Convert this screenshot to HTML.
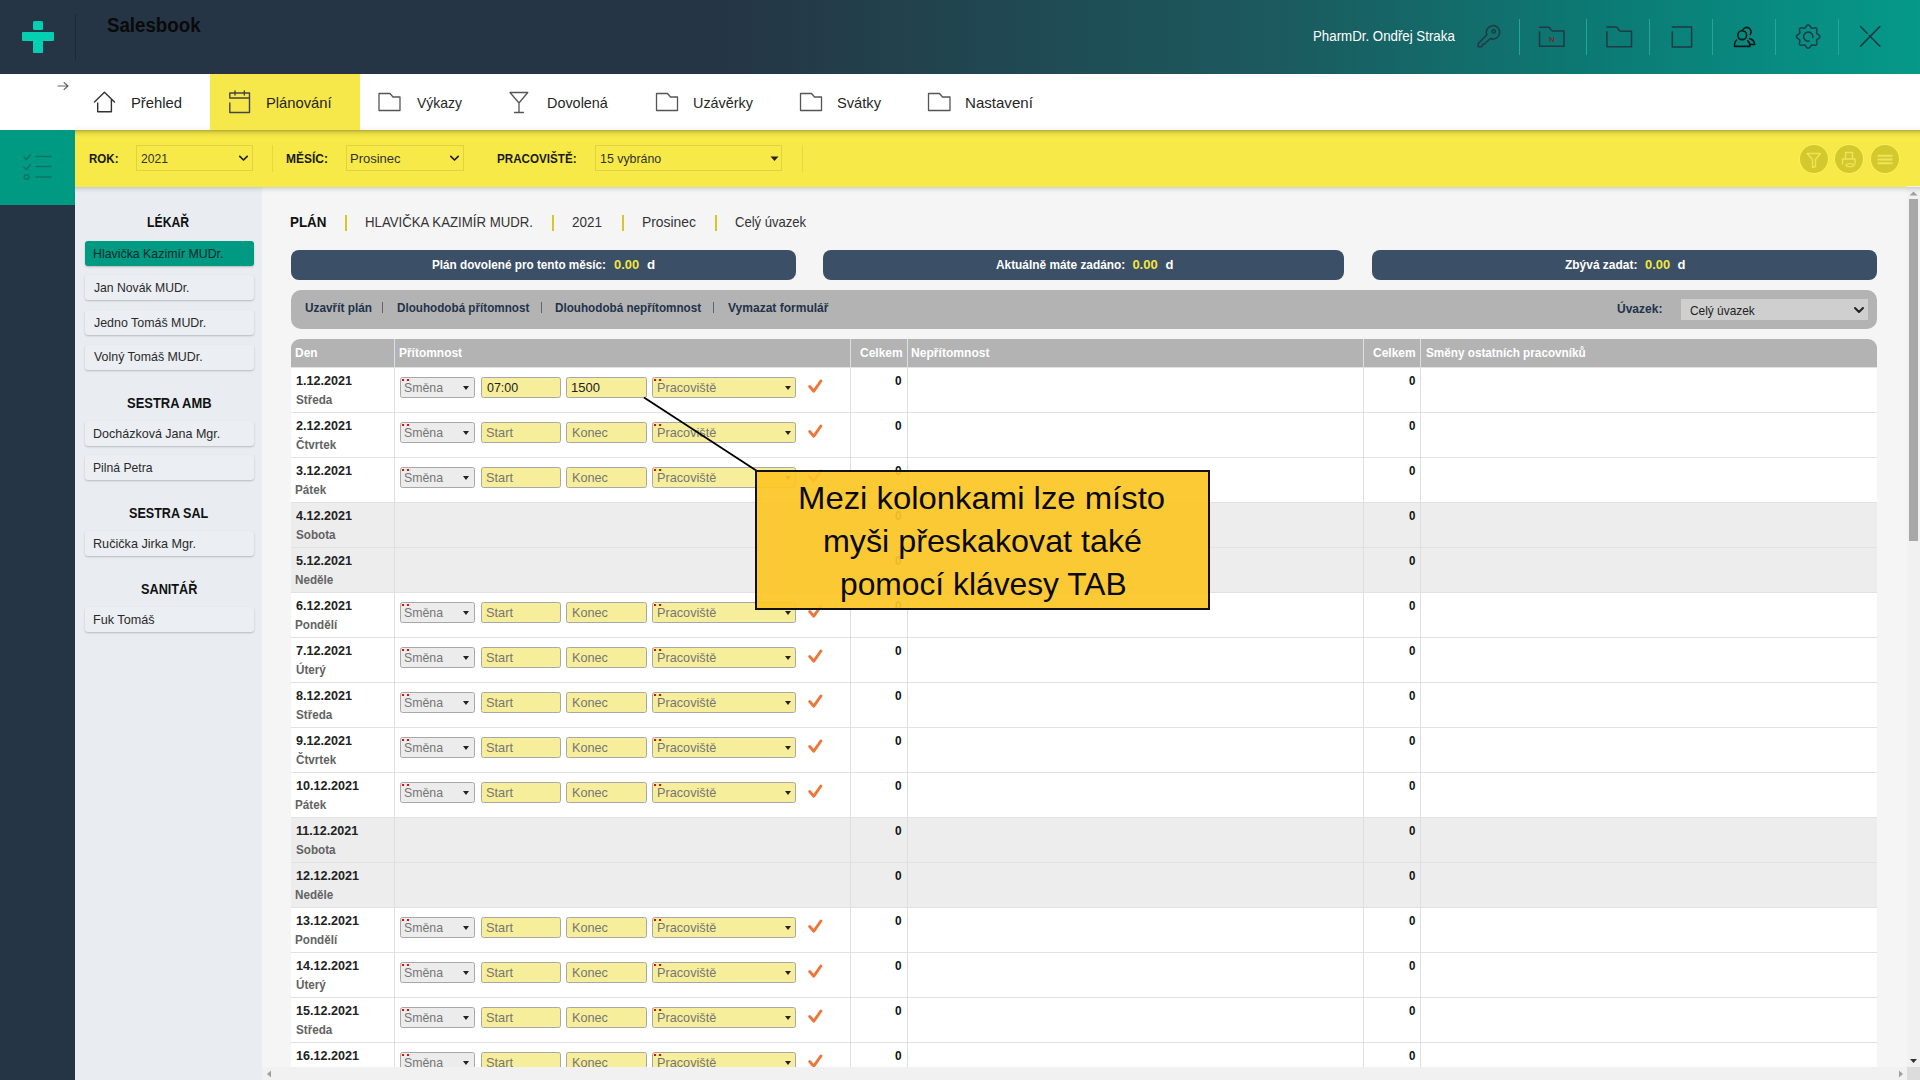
<!DOCTYPE html>
<html><head><meta charset="utf-8">
<style>
*{box-sizing:border-box;margin:0;padding:0}
html,body{width:1920px;height:1080px;overflow:hidden;font-family:"Liberation Sans",sans-serif;background:#f5f5f5;position:relative;color:#222}
.abs{position:absolute}
.t{position:absolute;white-space:nowrap;line-height:1;transform-origin:0 0;z-index:10}
#hdr{left:0;top:0;width:1920px;height:74px;background:linear-gradient(to right,#253545 0px,#253545 720px,#1b5b5f 1290px,#0c7a74 1600px,#05998a 1920px)}
#nav{left:0;top:74px;width:1920px;height:56px;background:#fff;z-index:3}
#navsh{left:75px;top:130px;width:1845px;height:7px;background:linear-gradient(rgba(0,0,0,.27),rgba(0,0,0,.12) 30%,rgba(0,0,0,.04) 65%,rgba(0,0,0,0));z-index:4}
#navsh2{left:75px;top:124px;width:1845px;height:6px;background:linear-gradient(rgba(0,0,0,0),rgba(0,0,0,.035));z-index:4}
#teal{left:0;top:130px;width:75px;height:75px;background:#009982;z-index:2}
#lside{left:0;top:205px;width:75px;height:875px;background:#253545}
#ybar{left:75px;top:130px;width:1845px;height:57px;background:#f6e948;z-index:2}
#ybarsh{left:75px;top:187px;width:1845px;height:6px;background:linear-gradient(rgba(0,0,0,.14),rgba(0,0,0,.05) 50%,rgba(0,0,0,0));z-index:17}
#panel{left:75px;top:186px;width:187px;height:894px;background:#e9edf1}
/* header */
.logo1{left:33px;top:20.5px;width:9.5px;height:9.5px;background:#04cfb1;border-radius:1.5px}
.logo3{left:33px;top:40px;width:9.5px;height:12.5px;background:#04cfb1;border-radius:1px}
.logo2{left:22px;top:32px;width:31.8px;height:9.3px;background:#04cfb1;border-radius:1px}
.hdiv{left:75px;top:14px;width:1px;height:46px;background:#1b2935}
.brand{left:106px;top:14px;font-size:20px;font-weight:bold;color:#0d0d0d}
.user{left:1313px;top:29px;font-size:14px;color:#fff}
.hsep{top:19px;width:1px;height:36px;background:#27ab99;opacity:.9}
.hic{position:absolute;top:0}
/* nav */
.nv{top:95px;font-size:15px;color:#222;z-index:5}
.navarrow{left:57px;top:79px;font-size:13px;color:#555;z-index:5}
.tabon{left:210px;top:74px;width:150px;height:56px;background:#f6e84a;z-index:4}
.nic{position:absolute;z-index:5}
/* filter */
.fl{top:152px;font-size:13px;font-weight:bold;color:#1a1a1a;z-index:5}
.fsel{position:absolute;top:145px;height:26px;border:1px solid #e0d240;z-index:5;font-size:13px;color:#333}
.fsel span{position:absolute;left:6px;top:6px;line-height:1}
.fdiv{position:absolute;top:145px;width:1px;height:27px;background:#e6d83f;z-index:5}
.fcirc{position:absolute;top:145px;width:28px;height:28px;border-radius:50%;background:#d3c82c;z-index:5;box-shadow:0 0 1px 1px rgba(255,250,120,.5)}
/* sidebar */
.sh{left:75px;width:187px;text-align:center;font-size:13px;font-weight:bold;color:#1a1a1a}
.sb{position:absolute;left:85px;width:169px;height:25px;background:#ebeef2;border-radius:3px;box-shadow:0 1px 2px rgba(0,0,0,.22);font-size:12.5px;color:#333}
.sb span{position:absolute;left:10px;top:6px;line-height:1;white-space:nowrap}
.sb.on{background:#009982;color:#1a2a2a}
/* main */
.bc{top:216px;font-size:14px;color:#333}
.bsep{position:absolute;top:214.5px;width:1.5px;height:16px;background:#d9c52a}
.pill{position:absolute;top:250px;height:30px;background:#3b4f66;border-radius:8px;color:#fff;font-size:13px;font-weight:bold;text-align:center}
.pill span{position:absolute;top:9px;line-height:1;white-space:nowrap}
.pill .y{color:#f6e84a}
#abar{left:291px;top:290px;width:1586px;height:39px;background:#b3b3b3;border-radius:10px}
.ab{top:302px;font-size:13px;font-weight:bold;color:#253545}
.absep{position:absolute;top:302px;width:1px;height:11px;background:#5d6670}
#usel{left:1681px;top:299px;width:187px;height:21px;background:#cfcfcf;font-size:13px;color:#222}
/* table */
#thead{left:291px;top:339px;width:1586px;height:28px;background:#b3b3b3;border-radius:9px 9px 0 0}
.th{top:347px;font-size:12px;font-weight:bold;color:#fff}
.vline{position:absolute;width:1px;background:#dfdfdf}
.row{position:absolute;left:291px;width:1586px;height:45px;background:#fff;border-top:1px solid #e2e2e2}
.row.we{background:#ededed}
.dt{position:absolute;left:5px;top:9px;font-size:12px;font-weight:bold;color:#222;line-height:1}
.dn{position:absolute;left:5px;top:28px;font-size:12px;font-weight:bold;color:#555;line-height:1}
.sel,.inp{position:absolute;z-index:7;height:21px;border:1.5px solid #a8a8a8;border-radius:2.5px;font-size:12.5px;color:#7a7a7a}
.sel span,.inp span{position:absolute;top:4px;line-height:1;white-space:nowrap}
.sm{left:400px;width:75px;background:#ececec}
.sm span{left:4px}
.pr{left:652px;width:144px;background:#f6ee9a}
.pr span{left:5px}
.inp{background:#f6ee9a}
.inp span{left:5px}
.i1{left:481px;width:80px}
.i2{left:566px;width:81px}
.val{color:#222}
.rd{position:absolute;left:1px;top:1px;width:8px;height:2px;background:linear-gradient(to right,#f00 0,#f00 2px,transparent 2px,transparent 5px,#f00 5px,#f00 7px,transparent 7px)}
.tri{position:absolute;top:7.5px;width:0;height:0;border-left:3.7px solid transparent;border-right:3.7px solid transparent;border-top:4px solid #222}
.sm .tri{left:62.3px}
.pr .tri{left:131.5px}
.chk{position:absolute;left:807px;z-index:8}
.z{position:absolute;top:9px;font-size:12px;font-weight:bold;color:#111;line-height:1}
.z1{left:604px}
.z2{left:1118px}
/* scrollbars */
#vscroll{z-index:15;left:1907px;top:186px;width:13px;height:881px;background:#f1f1f1}
#vthumb{z-index:16;left:1909px;top:199px;width:9px;height:342px;background:#a8a8a8}
#hscroll{z-index:15;left:262px;top:1067px;width:1645px;height:13px;background:#f1f1f1}
#corner{z-index:16;left:1907px;top:1067px;width:13px;height:13px;background:#dcdcdc}
/* callout */
#callline{position:absolute;left:0;top:0;z-index:20}
#callout{left:755px;top:470px;width:455px;height:140px;background:rgba(252,198,38,.93);border:2px solid #111;z-index:21;font-size:31px;color:#111;text-align:center;line-height:43px;padding-top:5px}

</style></head><body>
<div id="hdr" class="abs"></div>
<div class="abs logo1"></div><div class="abs logo2"></div><div class="abs logo3"></div>
<div class="abs hdiv"></div>
<div class="abs hsep" style="left:1519px"></div>
<div class="abs hsep" style="left:1586px"></div>
<div class="abs hsep" style="left:1649px"></div>
<div class="abs hsep" style="left:1712px"></div>
<div class="abs hsep" style="left:1775px"></div>
<div class="abs hsep" style="left:1838px"></div>
<svg class="hic" width="1920" height="74" style="left:0">
 <g fill="none" stroke="#1e3a44" stroke-width="1.5" stroke-linecap="round" stroke-linejoin="round">
  <path d="M1486.79 34.81 L1478.2 43.8 V46.8 H1481.5 L1482.6 45.6 V44.3 H1484 L1490.49 38.51 A6.7 6.7 0 1 0 1486.79 34.81 Z"/><circle cx="1493.7" cy="31.4" r="1.6"/>
  <path d="M1539.5 27.2 H1548.8 C1550 27.2 1550.8 30.9 1552.3 30.9 H1564 V46.3 H1539.5 V32"/>
  <path d="M1606.9 27 H1616.3 C1617.5 27 1618.6 31.2 1620.5 31.2 H1631.5 V46.7 H1606.9 V31.8"/>
  <path d="M1672.3 27 H1691.6 V46.9 H1672.3 V32.1"/>
  <g stroke="#0b1718" stroke-width="1.6">
   <path d="M1742.6 30.3 A4.4 4.4 0 1 1 1750.3 34.4"/>
   <circle cx="1742.2" cy="35.2" r="4.4"/>
   <path d="M1736.6 40 C1735 41.3 1734.5 43.5 1734.5 46.4 H1750 C1750 44 1749.3 41.8 1747.6 40.6"/>
   <path d="M1749.5 38.6 C1752.5 39.6 1754.6 41.8 1754.6 44.5 H1750.5"/>
  </g>
  <path d="M1808.20 24.95 L1808.65 25.02 L1809.10 25.22 L1809.51 25.54 L1809.89 25.95 L1810.23 26.40 L1810.54 26.86 L1810.82 27.30 L1811.10 27.67 L1811.39 27.96 L1811.70 28.15 L1812.06 28.23 L1812.46 28.23 L1812.92 28.17 L1813.43 28.06 L1813.98 27.95 L1814.54 27.87 L1815.09 27.86 L1815.61 27.92 L1816.07 28.09 L1816.44 28.36 L1816.71 28.73 L1816.88 29.19 L1816.94 29.71 L1816.93 30.26 L1816.85 30.82 L1816.74 31.37 L1816.63 31.88 L1816.57 32.34 L1816.57 32.74 L1816.65 33.10 L1816.84 33.41 L1817.13 33.70 L1817.50 33.98 L1817.94 34.26 L1818.40 34.57 L1818.85 34.91 L1819.26 35.29 L1819.58 35.70 L1819.78 36.15 L1819.85 36.60 L1819.78 37.05 L1819.58 37.50 L1819.26 37.91 L1818.85 38.29 L1818.40 38.63 L1817.94 38.94 L1817.50 39.22 L1817.13 39.50 L1816.84 39.79 L1816.65 40.10 L1816.57 40.46 L1816.57 40.86 L1816.63 41.32 L1816.74 41.83 L1816.85 42.38 L1816.93 42.94 L1816.94 43.49 L1816.88 44.01 L1816.71 44.47 L1816.44 44.84 L1816.07 45.11 L1815.61 45.28 L1815.09 45.34 L1814.54 45.33 L1813.98 45.25 L1813.43 45.14 L1812.92 45.03 L1812.46 44.97 L1812.06 44.97 L1811.70 45.05 L1811.39 45.24 L1811.10 45.53 L1810.82 45.90 L1810.54 46.34 L1810.23 46.80 L1809.89 47.25 L1809.51 47.66 L1809.10 47.98 L1808.65 48.18 L1808.20 48.25 L1807.75 48.18 L1807.30 47.98 L1806.89 47.66 L1806.51 47.25 L1806.17 46.80 L1805.86 46.34 L1805.58 45.90 L1805.30 45.53 L1805.01 45.24 L1804.70 45.05 L1804.34 44.97 L1803.94 44.97 L1803.48 45.03 L1802.97 45.14 L1802.42 45.25 L1801.86 45.33 L1801.31 45.34 L1800.79 45.28 L1800.33 45.11 L1799.96 44.84 L1799.69 44.47 L1799.52 44.01 L1799.46 43.49 L1799.47 42.94 L1799.55 42.38 L1799.66 41.83 L1799.77 41.32 L1799.83 40.86 L1799.83 40.46 L1799.75 40.10 L1799.56 39.79 L1799.27 39.50 L1798.90 39.22 L1798.46 38.94 L1798.00 38.63 L1797.55 38.29 L1797.14 37.91 L1796.82 37.50 L1796.62 37.05 L1796.55 36.60 L1796.62 36.15 L1796.82 35.70 L1797.14 35.29 L1797.55 34.91 L1798.00 34.57 L1798.46 34.26 L1798.90 33.98 L1799.27 33.70 L1799.56 33.41 L1799.75 33.10 L1799.83 32.74 L1799.83 32.34 L1799.77 31.88 L1799.66 31.37 L1799.55 30.82 L1799.47 30.26 L1799.46 29.71 L1799.52 29.19 L1799.69 28.73 L1799.96 28.36 L1800.33 28.09 L1800.79 27.92 L1801.31 27.86 L1801.86 27.87 L1802.42 27.95 L1802.97 28.06 L1803.48 28.17 L1803.94 28.23 L1804.34 28.23 L1804.70 28.15 L1805.01 27.96 L1805.30 27.67 L1805.58 27.30 L1805.86 26.86 L1806.17 26.40 L1806.51 25.95 L1806.89 25.54 L1807.30 25.22 L1807.75 25.02 L1808.20 24.95Z"/>
  <path d="M1809.16 41.10 A4.6 4.6 0 1 1 1812.70 37.56"/>
  <path d="M1860.6 26.6 L1867.3 33.5 M1869.3 35.5 L1879.8 46.1 M1879.8 26.6 L1860.6 46.1"/>
 </g>
 <text x="1549" y="41.5" font-family="Liberation Sans" font-size="8" font-weight="bold" fill="#6b2d2d">N</text>
</svg>

<div id="nav" class="abs"></div>
<div id="navsh" class="abs"></div>
<div id="navsh2" class="abs"></div>
<div class="abs tabon"></div>
<svg class="abs" style="left:55px;top:80px;z-index:6" width="16" height="12"><path d="M3 6 H13 M9 2.5 L13 6 L9 9.5" fill="none" stroke="#666" stroke-width="1.1" stroke-linecap="round" stroke-linejoin="round"/></svg>
<svg class="nic" style="left:0;top:74px" width="1100" height="56">
 <g fill="none" stroke="#333" stroke-width="1.4" stroke-linejoin="round" stroke-linecap="round">
  <path d="M94.5 28 L104.4 18.3 L114.5 28 M97.7 29 V37.8 H111.4 V25.5"/>
  <path d="M229.8 24 V19 H249.5 V38.5 H229.8 V29 M229.8 24 H249.5 M235 17 V21 M244.3 17 V21" stroke="#444"/>
  <path d="M379 19.5 H390 L393 23 H400 V36.5 H379 Z" stroke="#555" stroke-width="1.3"/>
  <path d="M510 18.5 H527.8 L519 29 Z M519 29 V38.5 M514.5 38.5 H523.5" stroke="#555" stroke-width="1.3"/>
  <path d="M656.5 19.5 H667.5 L670.5 23 H677.5 V36.5 H656.5 Z" stroke="#555" stroke-width="1.3"/>
  <path d="M800.5 19.5 H811.5 L814.5 23 H821.5 V36.5 H800.5 Z" stroke="#555" stroke-width="1.3"/>
  <path d="M928.5 19.5 H939.5 L942.5 23 H950 V36.5 H928.5 Z" stroke="#555" stroke-width="1.3"/>
 </g>
</svg>

<div id="teal" class="abs"></div>
<svg class="abs" style="left:0;top:130px;z-index:3" width="75" height="75">
 <g fill="none" stroke="#0f7465" stroke-width="1.5" stroke-linecap="round">
  <path d="M24 27 L26.5 29.5 L30.5 24.5 M24 37 L26.5 39.5 L30.5 34.5 M36 26.5 H51 M36 36.5 H51 M36 47 H51"/>
  <circle cx="26.5" cy="47" r="2.3"/>
 </g>
</svg>
<div id="lside" class="abs"></div>
<div id="ybar" class="abs"></div>
<div id="ybarsh" class="abs"></div>
<div class="fsel" style="left:136px;width:117px"></div>
<div class="fdiv" style="left:272px"></div>
<div class="fsel" style="left:346px;width:118px"></div>
<div class="fsel" style="left:595px;width:187px"></div>
<div class="fdiv" style="left:802px"></div>
<svg class="abs" style="left:0;top:130px;z-index:6" width="1920" height="56">
 <g fill="none" stroke="#222" stroke-width="1.7" stroke-linecap="round" stroke-linejoin="round">
  <path d="M239.8 26.3 L243.5 30 L247.2 26.3 M450.8 26.3 L454.5 30 L458.2 26.3"/>
 </g>
 <path d="M770.5 26.5 H778.5 L774.5 31 Z" fill="#222"/>
</svg>
<div class="fcirc" style="left:1800px"></div>
<div class="fcirc" style="left:1835px"></div>
<div class="fcirc" style="left:1871px"></div>
<svg class="abs" style="left:0;top:130px;z-index:6" width="1920" height="56">
 <g fill="none" stroke="#efe35a" stroke-width="1.4" stroke-linejoin="round" stroke-linecap="round">
  <path d="M1807 23.5 H1820.5 L1815.5 29.5 V36.5 L1812.5 37.5 V29.5 Z"/>
  <path d="M1845.5 28.5 V22.5 H1852.5 V28.5 M1842.5 34 V29 H1855 V34 M1846 35.5 C1846 33 1854 33 1854 35.5 C1854 37 1846 37 1846 35.5 Z"/>
  <path d="M1877.5 25.8 H1892.5 M1877.5 29.5 H1892.5 M1877.5 33.2 H1892.5" stroke-width="1.9" stroke-linecap="butt"/>
 </g>
</svg>

<div id="panel" class="abs"></div>
<div class="sb on" style="top:241px"></div>
<div class="sb" style="top:275px"></div>
<div class="sb" style="top:310px"></div>
<div class="sb" style="top:345px"></div>
<div class="sb" style="top:421px"></div>
<div class="sb" style="top:455px"></div>
<div class="sb" style="top:531px"></div>
<div class="sb" style="top:607px"></div>

<div class="bsep" style="left:345px"></div>
<div class="bsep" style="left:552px"></div>
<div class="bsep" style="left:622px"></div>
<div class="bsep" style="left:715px"></div>

<div class="pill" style="left:291px;width:505px"></div>
<div class="pill" style="left:823px;width:521px"></div>
<div class="pill" style="left:1372px;width:505px"></div>

<div id="abar" class="abs"></div>
<div class="absep" style="left:382px"></div>
<div class="absep" style="left:541px"></div>
<div class="absep" style="left:713px"></div>
<div id="usel" class="abs">
<svg class="abs" style="left:172px;top:6px" width="12" height="10"><path d="M2 3 L6 7 L10 3" fill="none" stroke="#222" stroke-width="2" stroke-linecap="round" stroke-linejoin="round"/></svg></div>

<div id="thead" class="abs"></div>

<div class="row" style="top:367px"></div>
<div class="t" style="left:295.60px;top:374.58px;font-size:12.5px;color:#222;font-weight:bold;transform:scaleX(1.0054);z-index:8;">1.12.2021</div>
<div class="t" style="left:295.50px;top:393.73px;font-size:12.5px;color:#636363;font-weight:bold;transform:scaleX(0.9333);z-index:8;">Středa</div>
<div class="sel sm" style="top:377px"><i class="rd"></i><b class="tri"></b></div>
<div class="inp i1" style="top:377px"></div>
<div class="inp i2" style="top:377px"></div>
<div class="sel pr" style="top:377px"><i class="rd"></i><b class="tri"></b></div>
<svg class="chk" style="top:379px" width="16" height="14" viewBox="0 0 16 14"><path d="M2.7 7.5 L6.8 12.2 L13.9 2" fill="none" stroke="#ec773b" stroke-width="2.9" stroke-linecap="round" stroke-linejoin="round"/></svg>
<div class="t" style="left:403.99px;top:382.03px;font-size:12.2px;color:#767676;transform:scaleX(1.0105);z-index:8;">Směna</div>
<div class="t" style="left:486.90px;top:382.03px;font-size:12.2px;color:#222;transform:scaleX(1.0233);z-index:8;">07:00</div>
<div class="t" style="left:571.23px;top:382.03px;font-size:12.2px;color:#222;transform:scaleX(1.0654);z-index:8;">1500</div>
<div class="t" style="left:657.26px;top:382.03px;font-size:12.2px;color:#767676;transform:scaleX(1.0411);z-index:8;">Pracoviště</div>
<div class="t" style="left:895.30px;top:375.00px;font-size:12px;color:#111;font-weight:bold;transform:scaleX(0.9857);z-index:8;">0</div>
<div class="t" style="left:1408.60px;top:375.00px;font-size:12px;color:#111;font-weight:bold;transform:scaleX(0.9571);z-index:8;">0</div>
<div class="row" style="top:412px"></div>
<div class="t" style="left:295.60px;top:419.58px;font-size:12.5px;color:#222;font-weight:bold;transform:scaleX(1.0054);z-index:8;">2.12.2021</div>
<div class="t" style="left:295.50px;top:438.73px;font-size:12.5px;color:#636363;font-weight:bold;transform:scaleX(0.9333);z-index:8;">Čtvrtek</div>
<div class="sel sm" style="top:422px"><i class="rd"></i><b class="tri"></b></div>
<div class="inp i1" style="top:422px"></div>
<div class="inp i2" style="top:422px"></div>
<div class="sel pr" style="top:422px"><i class="rd"></i><b class="tri"></b></div>
<svg class="chk" style="top:424px" width="16" height="14" viewBox="0 0 16 14"><path d="M2.7 7.5 L6.8 12.2 L13.9 2" fill="none" stroke="#ec773b" stroke-width="2.9" stroke-linecap="round" stroke-linejoin="round"/></svg>
<div class="t" style="left:403.99px;top:427.03px;font-size:12.2px;color:#767676;transform:scaleX(1.0105);z-index:8;">Směna</div>
<div class="t" style="left:485.95px;top:427.03px;font-size:12.2px;color:#767676;transform:scaleX(1.0480);z-index:8;">Start</div>
<div class="t" style="left:571.76px;top:427.03px;font-size:12.2px;color:#767676;transform:scaleX(1.0394);z-index:8;">Konec</div>
<div class="t" style="left:657.26px;top:427.03px;font-size:12.2px;color:#767676;transform:scaleX(1.0411);z-index:8;">Pracoviště</div>
<div class="t" style="left:895.30px;top:420.00px;font-size:12px;color:#111;font-weight:bold;transform:scaleX(0.9857);z-index:8;">0</div>
<div class="t" style="left:1408.60px;top:420.00px;font-size:12px;color:#111;font-weight:bold;transform:scaleX(0.9571);z-index:8;">0</div>
<div class="row" style="top:457px"></div>
<div class="t" style="left:295.60px;top:464.58px;font-size:12.5px;color:#222;font-weight:bold;transform:scaleX(1.0054);z-index:8;">3.12.2021</div>
<div class="t" style="left:294.57px;top:483.73px;font-size:12.5px;color:#636363;font-weight:bold;transform:scaleX(0.9333);z-index:8;">Pátek</div>
<div class="sel sm" style="top:467px"><i class="rd"></i><b class="tri"></b></div>
<div class="inp i1" style="top:467px"></div>
<div class="inp i2" style="top:467px"></div>
<div class="sel pr" style="top:467px"><i class="rd"></i><b class="tri"></b></div>
<svg class="chk" style="top:469px" width="16" height="14" viewBox="0 0 16 14"><path d="M2.7 7.5 L6.8 12.2 L13.9 2" fill="none" stroke="#ec773b" stroke-width="2.9" stroke-linecap="round" stroke-linejoin="round"/></svg>
<div class="t" style="left:403.99px;top:472.03px;font-size:12.2px;color:#767676;transform:scaleX(1.0105);z-index:8;">Směna</div>
<div class="t" style="left:485.95px;top:472.03px;font-size:12.2px;color:#767676;transform:scaleX(1.0480);z-index:8;">Start</div>
<div class="t" style="left:571.76px;top:472.03px;font-size:12.2px;color:#767676;transform:scaleX(1.0394);z-index:8;">Konec</div>
<div class="t" style="left:657.26px;top:472.03px;font-size:12.2px;color:#767676;transform:scaleX(1.0411);z-index:8;">Pracoviště</div>
<div class="t" style="left:895.30px;top:465.00px;font-size:12px;color:#111;font-weight:bold;transform:scaleX(0.9857);z-index:8;">0</div>
<div class="t" style="left:1408.60px;top:465.00px;font-size:12px;color:#111;font-weight:bold;transform:scaleX(0.9571);z-index:8;">0</div>
<div class="row we" style="top:502px"></div>
<div class="t" style="left:295.60px;top:509.58px;font-size:12.5px;color:#222;font-weight:bold;transform:scaleX(1.0054);z-index:8;">4.12.2021</div>
<div class="t" style="left:295.50px;top:528.73px;font-size:12.5px;color:#636363;font-weight:bold;transform:scaleX(0.9333);z-index:8;">Sobota</div>
<div class="t" style="left:895.30px;top:510.00px;font-size:12px;color:#111;font-weight:bold;transform:scaleX(0.9857);z-index:8;">0</div>
<div class="t" style="left:1408.60px;top:510.00px;font-size:12px;color:#111;font-weight:bold;transform:scaleX(0.9571);z-index:8;">0</div>
<div class="row we" style="top:547px"></div>
<div class="t" style="left:295.60px;top:554.58px;font-size:12.5px;color:#222;font-weight:bold;transform:scaleX(1.0054);z-index:8;">5.12.2021</div>
<div class="t" style="left:294.57px;top:573.73px;font-size:12.5px;color:#636363;font-weight:bold;transform:scaleX(0.9333);z-index:8;">Neděle</div>
<div class="t" style="left:895.30px;top:555.00px;font-size:12px;color:#111;font-weight:bold;transform:scaleX(0.9857);z-index:8;">0</div>
<div class="t" style="left:1408.60px;top:555.00px;font-size:12px;color:#111;font-weight:bold;transform:scaleX(0.9571);z-index:8;">0</div>
<div class="row" style="top:592px"></div>
<div class="t" style="left:295.60px;top:599.58px;font-size:12.5px;color:#222;font-weight:bold;transform:scaleX(1.0054);z-index:8;">6.12.2021</div>
<div class="t" style="left:294.57px;top:618.73px;font-size:12.5px;color:#636363;font-weight:bold;transform:scaleX(0.9333);z-index:8;">Pondělí</div>
<div class="sel sm" style="top:602px"><i class="rd"></i><b class="tri"></b></div>
<div class="inp i1" style="top:602px"></div>
<div class="inp i2" style="top:602px"></div>
<div class="sel pr" style="top:602px"><i class="rd"></i><b class="tri"></b></div>
<svg class="chk" style="top:604px" width="16" height="14" viewBox="0 0 16 14"><path d="M2.7 7.5 L6.8 12.2 L13.9 2" fill="none" stroke="#ec773b" stroke-width="2.9" stroke-linecap="round" stroke-linejoin="round"/></svg>
<div class="t" style="left:403.99px;top:607.03px;font-size:12.2px;color:#767676;transform:scaleX(1.0105);z-index:8;">Směna</div>
<div class="t" style="left:485.95px;top:607.03px;font-size:12.2px;color:#767676;transform:scaleX(1.0480);z-index:8;">Start</div>
<div class="t" style="left:571.76px;top:607.03px;font-size:12.2px;color:#767676;transform:scaleX(1.0394);z-index:8;">Konec</div>
<div class="t" style="left:657.26px;top:607.03px;font-size:12.2px;color:#767676;transform:scaleX(1.0411);z-index:8;">Pracoviště</div>
<div class="t" style="left:895.30px;top:600.00px;font-size:12px;color:#111;font-weight:bold;transform:scaleX(0.9857);z-index:8;">0</div>
<div class="t" style="left:1408.60px;top:600.00px;font-size:12px;color:#111;font-weight:bold;transform:scaleX(0.9571);z-index:8;">0</div>
<div class="row" style="top:637px"></div>
<div class="t" style="left:295.60px;top:644.58px;font-size:12.5px;color:#222;font-weight:bold;transform:scaleX(1.0054);z-index:8;">7.12.2021</div>
<div class="t" style="left:295.50px;top:663.73px;font-size:12.5px;color:#636363;font-weight:bold;transform:scaleX(0.9333);z-index:8;">Úterý</div>
<div class="sel sm" style="top:647px"><i class="rd"></i><b class="tri"></b></div>
<div class="inp i1" style="top:647px"></div>
<div class="inp i2" style="top:647px"></div>
<div class="sel pr" style="top:647px"><i class="rd"></i><b class="tri"></b></div>
<svg class="chk" style="top:649px" width="16" height="14" viewBox="0 0 16 14"><path d="M2.7 7.5 L6.8 12.2 L13.9 2" fill="none" stroke="#ec773b" stroke-width="2.9" stroke-linecap="round" stroke-linejoin="round"/></svg>
<div class="t" style="left:403.99px;top:652.03px;font-size:12.2px;color:#767676;transform:scaleX(1.0105);z-index:8;">Směna</div>
<div class="t" style="left:485.95px;top:652.03px;font-size:12.2px;color:#767676;transform:scaleX(1.0480);z-index:8;">Start</div>
<div class="t" style="left:571.76px;top:652.03px;font-size:12.2px;color:#767676;transform:scaleX(1.0394);z-index:8;">Konec</div>
<div class="t" style="left:657.26px;top:652.03px;font-size:12.2px;color:#767676;transform:scaleX(1.0411);z-index:8;">Pracoviště</div>
<div class="t" style="left:895.30px;top:645.00px;font-size:12px;color:#111;font-weight:bold;transform:scaleX(0.9857);z-index:8;">0</div>
<div class="t" style="left:1408.60px;top:645.00px;font-size:12px;color:#111;font-weight:bold;transform:scaleX(0.9571);z-index:8;">0</div>
<div class="row" style="top:682px"></div>
<div class="t" style="left:295.60px;top:689.58px;font-size:12.5px;color:#222;font-weight:bold;transform:scaleX(1.0054);z-index:8;">8.12.2021</div>
<div class="t" style="left:295.50px;top:708.73px;font-size:12.5px;color:#636363;font-weight:bold;transform:scaleX(0.9333);z-index:8;">Středa</div>
<div class="sel sm" style="top:692px"><i class="rd"></i><b class="tri"></b></div>
<div class="inp i1" style="top:692px"></div>
<div class="inp i2" style="top:692px"></div>
<div class="sel pr" style="top:692px"><i class="rd"></i><b class="tri"></b></div>
<svg class="chk" style="top:694px" width="16" height="14" viewBox="0 0 16 14"><path d="M2.7 7.5 L6.8 12.2 L13.9 2" fill="none" stroke="#ec773b" stroke-width="2.9" stroke-linecap="round" stroke-linejoin="round"/></svg>
<div class="t" style="left:403.99px;top:697.03px;font-size:12.2px;color:#767676;transform:scaleX(1.0105);z-index:8;">Směna</div>
<div class="t" style="left:485.95px;top:697.03px;font-size:12.2px;color:#767676;transform:scaleX(1.0480);z-index:8;">Start</div>
<div class="t" style="left:571.76px;top:697.03px;font-size:12.2px;color:#767676;transform:scaleX(1.0394);z-index:8;">Konec</div>
<div class="t" style="left:657.26px;top:697.03px;font-size:12.2px;color:#767676;transform:scaleX(1.0411);z-index:8;">Pracoviště</div>
<div class="t" style="left:895.30px;top:690.00px;font-size:12px;color:#111;font-weight:bold;transform:scaleX(0.9857);z-index:8;">0</div>
<div class="t" style="left:1408.60px;top:690.00px;font-size:12px;color:#111;font-weight:bold;transform:scaleX(0.9571);z-index:8;">0</div>
<div class="row" style="top:727px"></div>
<div class="t" style="left:295.60px;top:734.58px;font-size:12.5px;color:#222;font-weight:bold;transform:scaleX(1.0054);z-index:8;">9.12.2021</div>
<div class="t" style="left:295.50px;top:753.73px;font-size:12.5px;color:#636363;font-weight:bold;transform:scaleX(0.9333);z-index:8;">Čtvrtek</div>
<div class="sel sm" style="top:737px"><i class="rd"></i><b class="tri"></b></div>
<div class="inp i1" style="top:737px"></div>
<div class="inp i2" style="top:737px"></div>
<div class="sel pr" style="top:737px"><i class="rd"></i><b class="tri"></b></div>
<svg class="chk" style="top:739px" width="16" height="14" viewBox="0 0 16 14"><path d="M2.7 7.5 L6.8 12.2 L13.9 2" fill="none" stroke="#ec773b" stroke-width="2.9" stroke-linecap="round" stroke-linejoin="round"/></svg>
<div class="t" style="left:403.99px;top:742.03px;font-size:12.2px;color:#767676;transform:scaleX(1.0105);z-index:8;">Směna</div>
<div class="t" style="left:485.95px;top:742.03px;font-size:12.2px;color:#767676;transform:scaleX(1.0480);z-index:8;">Start</div>
<div class="t" style="left:571.76px;top:742.03px;font-size:12.2px;color:#767676;transform:scaleX(1.0394);z-index:8;">Konec</div>
<div class="t" style="left:657.26px;top:742.03px;font-size:12.2px;color:#767676;transform:scaleX(1.0411);z-index:8;">Pracoviště</div>
<div class="t" style="left:895.30px;top:735.00px;font-size:12px;color:#111;font-weight:bold;transform:scaleX(0.9857);z-index:8;">0</div>
<div class="t" style="left:1408.60px;top:735.00px;font-size:12px;color:#111;font-weight:bold;transform:scaleX(0.9571);z-index:8;">0</div>
<div class="row" style="top:772px"></div>
<div class="t" style="left:295.60px;top:779.58px;font-size:12.5px;color:#222;font-weight:bold;transform:scaleX(1.0054);z-index:8;">10.12.2021</div>
<div class="t" style="left:294.57px;top:798.73px;font-size:12.5px;color:#636363;font-weight:bold;transform:scaleX(0.9333);z-index:8;">Pátek</div>
<div class="sel sm" style="top:782px"><i class="rd"></i><b class="tri"></b></div>
<div class="inp i1" style="top:782px"></div>
<div class="inp i2" style="top:782px"></div>
<div class="sel pr" style="top:782px"><i class="rd"></i><b class="tri"></b></div>
<svg class="chk" style="top:784px" width="16" height="14" viewBox="0 0 16 14"><path d="M2.7 7.5 L6.8 12.2 L13.9 2" fill="none" stroke="#ec773b" stroke-width="2.9" stroke-linecap="round" stroke-linejoin="round"/></svg>
<div class="t" style="left:403.99px;top:787.03px;font-size:12.2px;color:#767676;transform:scaleX(1.0105);z-index:8;">Směna</div>
<div class="t" style="left:485.95px;top:787.03px;font-size:12.2px;color:#767676;transform:scaleX(1.0480);z-index:8;">Start</div>
<div class="t" style="left:571.76px;top:787.03px;font-size:12.2px;color:#767676;transform:scaleX(1.0394);z-index:8;">Konec</div>
<div class="t" style="left:657.26px;top:787.03px;font-size:12.2px;color:#767676;transform:scaleX(1.0411);z-index:8;">Pracoviště</div>
<div class="t" style="left:895.30px;top:780.00px;font-size:12px;color:#111;font-weight:bold;transform:scaleX(0.9857);z-index:8;">0</div>
<div class="t" style="left:1408.60px;top:780.00px;font-size:12px;color:#111;font-weight:bold;transform:scaleX(0.9571);z-index:8;">0</div>
<div class="row we" style="top:817px"></div>
<div class="t" style="left:295.60px;top:824.58px;font-size:12.5px;color:#222;font-weight:bold;transform:scaleX(1.0054);z-index:8;">11.12.2021</div>
<div class="t" style="left:295.50px;top:843.73px;font-size:12.5px;color:#636363;font-weight:bold;transform:scaleX(0.9333);z-index:8;">Sobota</div>
<div class="t" style="left:895.30px;top:825.00px;font-size:12px;color:#111;font-weight:bold;transform:scaleX(0.9857);z-index:8;">0</div>
<div class="t" style="left:1408.60px;top:825.00px;font-size:12px;color:#111;font-weight:bold;transform:scaleX(0.9571);z-index:8;">0</div>
<div class="row we" style="top:862px"></div>
<div class="t" style="left:295.60px;top:869.58px;font-size:12.5px;color:#222;font-weight:bold;transform:scaleX(1.0054);z-index:8;">12.12.2021</div>
<div class="t" style="left:294.57px;top:888.73px;font-size:12.5px;color:#636363;font-weight:bold;transform:scaleX(0.9333);z-index:8;">Neděle</div>
<div class="t" style="left:895.30px;top:870.00px;font-size:12px;color:#111;font-weight:bold;transform:scaleX(0.9857);z-index:8;">0</div>
<div class="t" style="left:1408.60px;top:870.00px;font-size:12px;color:#111;font-weight:bold;transform:scaleX(0.9571);z-index:8;">0</div>
<div class="row" style="top:907px"></div>
<div class="t" style="left:295.60px;top:914.58px;font-size:12.5px;color:#222;font-weight:bold;transform:scaleX(1.0054);z-index:8;">13.12.2021</div>
<div class="t" style="left:294.57px;top:933.73px;font-size:12.5px;color:#636363;font-weight:bold;transform:scaleX(0.9333);z-index:8;">Pondělí</div>
<div class="sel sm" style="top:917px"><i class="rd"></i><b class="tri"></b></div>
<div class="inp i1" style="top:917px"></div>
<div class="inp i2" style="top:917px"></div>
<div class="sel pr" style="top:917px"><i class="rd"></i><b class="tri"></b></div>
<svg class="chk" style="top:919px" width="16" height="14" viewBox="0 0 16 14"><path d="M2.7 7.5 L6.8 12.2 L13.9 2" fill="none" stroke="#ec773b" stroke-width="2.9" stroke-linecap="round" stroke-linejoin="round"/></svg>
<div class="t" style="left:403.99px;top:922.03px;font-size:12.2px;color:#767676;transform:scaleX(1.0105);z-index:8;">Směna</div>
<div class="t" style="left:485.95px;top:922.03px;font-size:12.2px;color:#767676;transform:scaleX(1.0480);z-index:8;">Start</div>
<div class="t" style="left:571.76px;top:922.03px;font-size:12.2px;color:#767676;transform:scaleX(1.0394);z-index:8;">Konec</div>
<div class="t" style="left:657.26px;top:922.03px;font-size:12.2px;color:#767676;transform:scaleX(1.0411);z-index:8;">Pracoviště</div>
<div class="t" style="left:895.30px;top:915.00px;font-size:12px;color:#111;font-weight:bold;transform:scaleX(0.9857);z-index:8;">0</div>
<div class="t" style="left:1408.60px;top:915.00px;font-size:12px;color:#111;font-weight:bold;transform:scaleX(0.9571);z-index:8;">0</div>
<div class="row" style="top:952px"></div>
<div class="t" style="left:295.60px;top:959.58px;font-size:12.5px;color:#222;font-weight:bold;transform:scaleX(1.0054);z-index:8;">14.12.2021</div>
<div class="t" style="left:295.50px;top:978.73px;font-size:12.5px;color:#636363;font-weight:bold;transform:scaleX(0.9333);z-index:8;">Úterý</div>
<div class="sel sm" style="top:962px"><i class="rd"></i><b class="tri"></b></div>
<div class="inp i1" style="top:962px"></div>
<div class="inp i2" style="top:962px"></div>
<div class="sel pr" style="top:962px"><i class="rd"></i><b class="tri"></b></div>
<svg class="chk" style="top:964px" width="16" height="14" viewBox="0 0 16 14"><path d="M2.7 7.5 L6.8 12.2 L13.9 2" fill="none" stroke="#ec773b" stroke-width="2.9" stroke-linecap="round" stroke-linejoin="round"/></svg>
<div class="t" style="left:403.99px;top:967.03px;font-size:12.2px;color:#767676;transform:scaleX(1.0105);z-index:8;">Směna</div>
<div class="t" style="left:485.95px;top:967.03px;font-size:12.2px;color:#767676;transform:scaleX(1.0480);z-index:8;">Start</div>
<div class="t" style="left:571.76px;top:967.03px;font-size:12.2px;color:#767676;transform:scaleX(1.0394);z-index:8;">Konec</div>
<div class="t" style="left:657.26px;top:967.03px;font-size:12.2px;color:#767676;transform:scaleX(1.0411);z-index:8;">Pracoviště</div>
<div class="t" style="left:895.30px;top:960.00px;font-size:12px;color:#111;font-weight:bold;transform:scaleX(0.9857);z-index:8;">0</div>
<div class="t" style="left:1408.60px;top:960.00px;font-size:12px;color:#111;font-weight:bold;transform:scaleX(0.9571);z-index:8;">0</div>
<div class="row" style="top:997px"></div>
<div class="t" style="left:295.60px;top:1004.58px;font-size:12.5px;color:#222;font-weight:bold;transform:scaleX(1.0054);z-index:8;">15.12.2021</div>
<div class="t" style="left:295.50px;top:1023.73px;font-size:12.5px;color:#636363;font-weight:bold;transform:scaleX(0.9333);z-index:8;">Středa</div>
<div class="sel sm" style="top:1007px"><i class="rd"></i><b class="tri"></b></div>
<div class="inp i1" style="top:1007px"></div>
<div class="inp i2" style="top:1007px"></div>
<div class="sel pr" style="top:1007px"><i class="rd"></i><b class="tri"></b></div>
<svg class="chk" style="top:1009px" width="16" height="14" viewBox="0 0 16 14"><path d="M2.7 7.5 L6.8 12.2 L13.9 2" fill="none" stroke="#ec773b" stroke-width="2.9" stroke-linecap="round" stroke-linejoin="round"/></svg>
<div class="t" style="left:403.99px;top:1012.03px;font-size:12.2px;color:#767676;transform:scaleX(1.0105);z-index:8;">Směna</div>
<div class="t" style="left:485.95px;top:1012.03px;font-size:12.2px;color:#767676;transform:scaleX(1.0480);z-index:8;">Start</div>
<div class="t" style="left:571.76px;top:1012.03px;font-size:12.2px;color:#767676;transform:scaleX(1.0394);z-index:8;">Konec</div>
<div class="t" style="left:657.26px;top:1012.03px;font-size:12.2px;color:#767676;transform:scaleX(1.0411);z-index:8;">Pracoviště</div>
<div class="t" style="left:895.30px;top:1005.00px;font-size:12px;color:#111;font-weight:bold;transform:scaleX(0.9857);z-index:8;">0</div>
<div class="t" style="left:1408.60px;top:1005.00px;font-size:12px;color:#111;font-weight:bold;transform:scaleX(0.9571);z-index:8;">0</div>
<div class="row" style="top:1042px"></div>
<div class="t" style="left:295.60px;top:1049.57px;font-size:12.5px;color:#222;font-weight:bold;transform:scaleX(1.0054);z-index:8;">16.12.2021</div>
<div class="t" style="left:295.50px;top:1068.72px;font-size:12.5px;color:#636363;font-weight:bold;transform:scaleX(0.9333);z-index:8;">Čtvrtek</div>
<div class="sel sm" style="top:1052px"><i class="rd"></i><b class="tri"></b></div>
<div class="inp i1" style="top:1052px"></div>
<div class="inp i2" style="top:1052px"></div>
<div class="sel pr" style="top:1052px"><i class="rd"></i><b class="tri"></b></div>
<svg class="chk" style="top:1054px" width="16" height="14" viewBox="0 0 16 14"><path d="M2.7 7.5 L6.8 12.2 L13.9 2" fill="none" stroke="#ec773b" stroke-width="2.9" stroke-linecap="round" stroke-linejoin="round"/></svg>
<div class="t" style="left:403.99px;top:1057.03px;font-size:12.2px;color:#767676;transform:scaleX(1.0105);z-index:8;">Směna</div>
<div class="t" style="left:485.95px;top:1057.03px;font-size:12.2px;color:#767676;transform:scaleX(1.0480);z-index:8;">Start</div>
<div class="t" style="left:571.76px;top:1057.03px;font-size:12.2px;color:#767676;transform:scaleX(1.0394);z-index:8;">Konec</div>
<div class="t" style="left:657.26px;top:1057.03px;font-size:12.2px;color:#767676;transform:scaleX(1.0411);z-index:8;">Pracoviště</div>
<div class="t" style="left:895.30px;top:1050.00px;font-size:12px;color:#111;font-weight:bold;transform:scaleX(0.9857);z-index:8;">0</div>
<div class="t" style="left:1408.60px;top:1050.00px;font-size:12px;color:#111;font-weight:bold;transform:scaleX(0.9571);z-index:8;">0</div>
<div class="vline" style="left:394px;top:339px;height:728px"></div>
<div class="vline" style="left:850px;top:339px;height:728px"></div>
<div class="vline" style="left:907px;top:339px;height:728px"></div>
<div class="vline" style="left:1363px;top:339px;height:728px"></div>
<div class="vline" style="left:1420px;top:339px;height:728px"></div>

<div id="vscroll" class="abs"></div>
<div id="vthumb" class="abs"></div>
<svg class="abs" style="left:1907px;top:188px;z-index:16" width="13" height="10"><path d="M2.5 7.5 H10.5 L6.5 3.5 Z" fill="#a0a0a0"/></svg>
<svg class="abs" style="left:1907px;top:1055.5px;z-index:16" width="13" height="10"><path d="M3 3 H10 L6.5 7 Z" fill="#333"/></svg>
<div id="hscroll" class="abs"></div>
<svg class="abs" style="left:264px;top:1068px;z-index:16" width="10" height="12"><path d="M7 2.5 V9.5 L3 6 Z" fill="#a0a0a0"/></svg>
<svg class="abs" style="left:1896px;top:1068px;z-index:16" width="10" height="12"><path d="M3 2.5 V9.5 L7 6 Z" fill="#a0a0a0"/></svg>
<div id="corner" class="abs"></div>

<svg id="callline" width="1920" height="1080"><path d="M644 397.5 L757 471" stroke="#000" stroke-width="1.8"/></svg>
<div id="callout" class="abs"></div>

<div class="t" style="left:106.80px;top:14.60px;font-size:20px;color:#0a0a0a;font-weight:bold;transform:scaleX(0.9350);z-index:10;">Salesbook</div>
<div class="t" style="left:1313.05px;top:29.20px;font-size:14px;color:#fff;transform:scaleX(0.9490);z-index:10;">PharmDr. Ondřej Straka</div>
<div class="t" style="left:130.68px;top:95.57px;font-size:14.5px;color:#262626;transform:scaleX(1.0204);z-index:10;">Přehled</div>
<div class="t" style="left:265.68px;top:95.57px;font-size:14.5px;color:#262626;transform:scaleX(1.0172);z-index:10;">Plánování</div>
<div class="t" style="left:416.70px;top:95.57px;font-size:14.5px;color:#262626;transform:scaleX(0.9638);z-index:10;">Výkazy</div>
<div class="t" style="left:546.71px;top:95.57px;font-size:14.5px;color:#262626;transform:scaleX(0.9934);z-index:10;">Dovolená</div>
<div class="t" style="left:693.01px;top:95.57px;font-size:14.5px;color:#262626;transform:scaleX(0.9917);z-index:10;">Uzávěrky</div>
<div class="t" style="left:836.99px;top:95.57px;font-size:14.5px;color:#262626;transform:scaleX(1.0116);z-index:10;">Svátky</div>
<div class="t" style="left:965.46px;top:95.57px;font-size:14.5px;color:#262626;transform:scaleX(1.0391);z-index:10;">Nastavení</div>
<div class="t" style="left:88.61px;top:151.75px;font-size:13px;color:#1a1a1a;font-weight:bold;transform:scaleX(0.8871);z-index:10;">ROK:</div>
<div class="t" style="left:286.08px;top:151.75px;font-size:13px;color:#1a1a1a;font-weight:bold;transform:scaleX(0.9205);z-index:10;">MĚSÍC:</div>
<div class="t" style="left:496.80px;top:151.75px;font-size:13px;color:#1a1a1a;font-weight:bold;transform:scaleX(0.8954);z-index:10;">PRACOVIŠTĚ:</div>
<div class="t" style="left:140.50px;top:151.75px;font-size:13px;color:#333;transform:scaleX(0.9310);z-index:10;">2021</div>
<div class="t" style="left:350.00px;top:151.75px;font-size:13px;color:#333;z-index:10;">Prosinec</div>
<div class="t" style="left:600.05px;top:151.75px;font-size:13px;color:#333;transform:scaleX(0.9524);z-index:10;">15 vybráno</div>
<div class="t" style="left:147.23px;top:215.00px;font-size:14px;color:#111;font-weight:bold;transform:scaleX(0.8745);z-index:10;">LÉKAŘ</div>
<div class="t" style="left:126.50px;top:396.10px;font-size:14px;color:#111;font-weight:bold;transform:scaleX(0.9242);z-index:10;">SESTRA AMB</div>
<div class="t" style="left:129.10px;top:506.40px;font-size:14px;color:#111;font-weight:bold;transform:scaleX(0.8989);z-index:10;">SESTRA SAL</div>
<div class="t" style="left:140.70px;top:582.20px;font-size:14px;color:#111;font-weight:bold;transform:scaleX(0.9065);z-index:10;">SANITÁŘ</div>
<div class="t" style="left:93.25px;top:246.55px;font-size:13px;color:#0f2a2a;transform:scaleX(0.9504);z-index:10;">Hlavička Kazimír MUDr.</div>
<div class="t" style="left:94.20px;top:280.85px;font-size:13px;color:#2a2a2a;transform:scaleX(0.9376);z-index:10;">Jan Novák MUDr.</div>
<div class="t" style="left:94.20px;top:316.05px;font-size:13px;color:#2a2a2a;transform:scaleX(0.9547);z-index:10;">Jedno Tomáš MUDr.</div>
<div class="t" style="left:94.20px;top:350.25px;font-size:13px;color:#2a2a2a;transform:scaleX(0.9540);z-index:10;">Volný Tomáš MUDr.</div>
<div class="t" style="left:93.24px;top:426.95px;font-size:13px;color:#2a2a2a;transform:scaleX(0.9623);z-index:10;">Docházková Jana Mgr.</div>
<div class="t" style="left:93.26px;top:461.25px;font-size:13px;color:#2a2a2a;transform:scaleX(0.9365);z-index:10;">Pilná Petra</div>
<div class="t" style="left:93.23px;top:537.45px;font-size:13px;color:#2a2a2a;transform:scaleX(0.9712);z-index:10;">Ručička Jirka Mgr.</div>
<div class="t" style="left:93.23px;top:612.55px;font-size:13px;color:#2a2a2a;transform:scaleX(0.9710);z-index:10;">Fuk Tomáš</div>
<div class="t" style="left:289.81px;top:213.95px;font-size:15px;color:#111;font-weight:bold;transform:scaleX(0.8923);z-index:10;">PLÁN</div>
<div class="t" style="left:364.72px;top:213.95px;font-size:15px;color:#333;transform:scaleX(0.8815);z-index:10;">HLAVIČKA KAZIMÍR MUDR.</div>
<div class="t" style="left:572.00px;top:213.95px;font-size:15px;color:#333;transform:scaleX(0.8970);z-index:10;">2021</div>
<div class="t" style="left:641.68px;top:213.95px;font-size:15px;color:#333;transform:scaleX(0.9246);z-index:10;">Prosinec</div>
<div class="t" style="left:735.30px;top:213.95px;font-size:15px;color:#333;transform:scaleX(0.8707);z-index:10;">Celý úvazek</div>
<div class="t" style="left:431.60px;top:258.35px;font-size:13px;color:#fff;font-weight:bold;transform:scaleX(0.9021);z-index:10;">Plán dovolené pro tento měsíc:</div>
<div class="t" style="left:613.90px;top:258.35px;font-size:13px;color:#f2e640;font-weight:bold;transform:scaleX(0.9920);z-index:10;">0.00</div>
<div class="t" style="left:646.80px;top:258.35px;font-size:13px;color:#fff;font-weight:bold;transform:scaleX(1.0286);z-index:10;">d</div>
<div class="t" style="left:995.80px;top:258.35px;font-size:13px;color:#fff;font-weight:bold;transform:scaleX(0.9128);z-index:10;">Aktuálně máte zadáno:</div>
<div class="t" style="left:1132.40px;top:258.35px;font-size:13px;color:#f2e640;font-weight:bold;z-index:10;">0.00</div>
<div class="t" style="left:1165.50px;top:258.35px;font-size:13px;color:#fff;font-weight:bold;z-index:10;">d</div>
<div class="t" style="left:1565.00px;top:258.35px;font-size:13px;color:#fff;font-weight:bold;transform:scaleX(0.9192);z-index:10;">Zbývá zadat:</div>
<div class="t" style="left:1644.50px;top:258.35px;font-size:13px;color:#f2e640;font-weight:bold;transform:scaleX(0.9920);z-index:10;">0.00</div>
<div class="t" style="left:1677.50px;top:258.35px;font-size:13px;color:#fff;font-weight:bold;z-index:10;">d</div>
<div class="t" style="left:304.80px;top:301.35px;font-size:13px;color:#22324a;font-weight:bold;transform:scaleX(0.9096);z-index:10;">Uzavřít plán</div>
<div class="t" style="left:397.00px;top:301.35px;font-size:13px;color:#22324a;font-weight:bold;transform:scaleX(0.8986);z-index:10;">Dlouhodobá přítomnost</div>
<div class="t" style="left:555.10px;top:301.35px;font-size:13px;color:#22324a;font-weight:bold;transform:scaleX(0.8994);z-index:10;">Dlouhodobá nepřítomnost</div>
<div class="t" style="left:728.20px;top:301.35px;font-size:13px;color:#22324a;font-weight:bold;transform:scaleX(0.9248);z-index:10;">Vymazat formulář</div>
<div class="t" style="left:1617.30px;top:302.05px;font-size:13px;color:#22324a;font-weight:bold;transform:scaleX(0.9250);z-index:10;">Úvazek:</div>
<div class="t" style="left:1689.80px;top:303.85px;font-size:13px;color:#222;transform:scaleX(0.9155);z-index:10;">Celý úvazek</div>
<div class="t" style="left:294.63px;top:346.95px;font-size:12.3px;color:#fff;font-weight:bold;transform:scaleX(0.9727);z-index:10;">Den</div>
<div class="t" style="left:398.53px;top:346.95px;font-size:12.3px;color:#fff;font-weight:bold;transform:scaleX(0.9719);z-index:10;">Přítomnost</div>
<div class="t" style="left:860.00px;top:346.95px;font-size:12.3px;color:#fff;font-weight:bold;transform:scaleX(0.9767);z-index:10;">Celkem</div>
<div class="t" style="left:911.42px;top:346.95px;font-size:12.3px;color:#fff;font-weight:bold;transform:scaleX(0.9823);z-index:10;">Nepřítomnost</div>
<div class="t" style="left:1373.00px;top:346.95px;font-size:12.3px;color:#fff;font-weight:bold;transform:scaleX(0.9767);z-index:10;">Celkem</div>
<div class="t" style="left:1426.00px;top:346.95px;font-size:12.3px;color:#fff;font-weight:bold;transform:scaleX(0.9539);z-index:10;">Směny ostatních pracovníků</div>
<div class="t" style="left:798.35px;top:482.40px;font-size:32px;color:#0a0a0a;transform:scaleX(1.0270);z-index:30;">Mezi kolonkami lze místo</div>
<div class="t" style="left:822.58px;top:525.40px;font-size:32px;color:#0a0a0a;transform:scaleX(1.0076);z-index:30;">myši přeskakovat také</div>
<div class="t" style="left:839.61px;top:568.40px;font-size:32px;color:#0a0a0a;transform:scaleX(0.9930);z-index:30;">pomocí klávesy TAB</div>

</body></html>
